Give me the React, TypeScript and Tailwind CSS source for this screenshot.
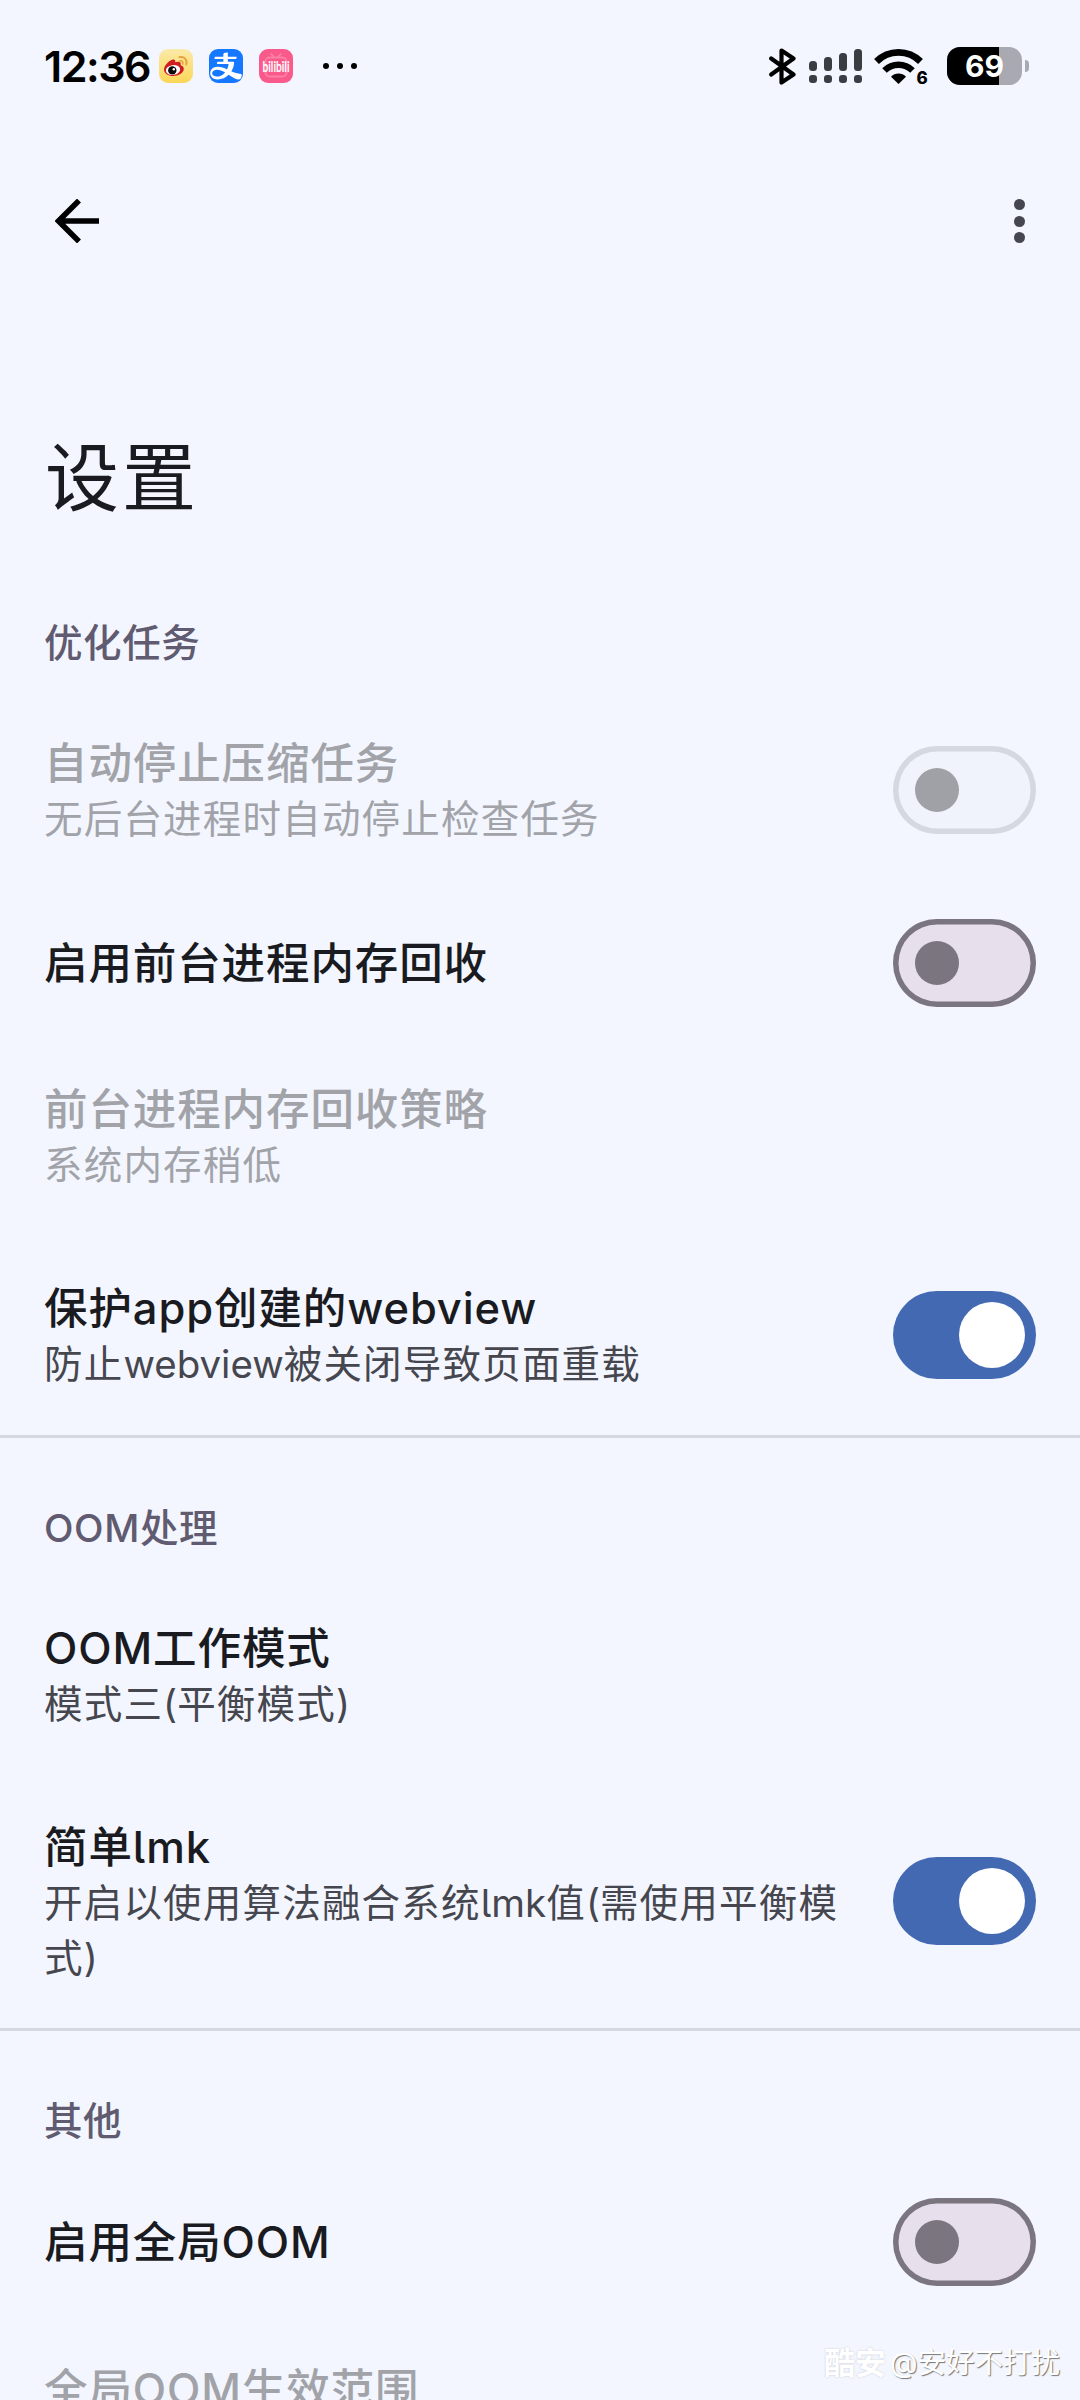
import React, { useState } from 'react';
import { AiOutlineAlipay } from 'react-icons/ai';

interface PreferenceProps {
    title: string;
    summary?: string;
    disabled?: boolean;
    defaultChecked?: boolean;
    hasSwitch?: boolean;
}

const WeiboIcon: React.FC = () => (
    <svg className="w-[34px] h-[34px]" viewBox="0 0 34 34">
        <defs>
            <linearGradient id="weibo" x1="0" y1="0" x2="0" y2="1">
                <stop offset="0" stopColor="#fae9a9" />
                <stop offset="1" stopColor="#fbd758" />
            </linearGradient>
        </defs>
        <rect width="34" height="34" rx="9" fill="url(#weibo)" />
        <path d="M5 20.500c0-4 5.500-9.500 9-10 2-.2 2.500 1 2.200 2.800 2.300-.9 5.300-1 5.600 1.200.1.800-.2 1.400-.3 1.800 2 .6 3.500 1.600 3.300 4-.3 3.700-5.300 6.700-10.600 6.700C9.300 27 5 24.500 5 20.500z" fill="#d01b20" />
        <ellipse cx="14" cy="21" rx="7.200" ry="4.900" fill="#fff" transform="rotate(-8 14 21)" />
        <circle cx="13.300" cy="21.400" r="4.200" fill="#0b0b0b" />
        <circle cx="14.800" cy="20.200" r="1.200" fill="#fff" />
        <path d="M20.300 8.200c5-1.200 8.300 2.800 7 7.300" fill="none" stroke="#e9a13a" strokeWidth="1.900" strokeLinecap="round" />
        <path d="M21 12c2.200-.5 3.400 1 2.800 3" fill="none" stroke="#e9a13a" strokeWidth="1.600" strokeLinecap="round" />
    </svg>
);

const BilibiliIcon: React.FC = () => (
    <svg className="w-[34px] h-[34px]" viewBox="0 0 34 34">
        <rect width="34" height="34" rx="9" fill="#fa5a8b" />
        <path d="M12 5l3 3M22 5l-3 3" stroke="#fc86aa" strokeWidth="1.500" strokeLinecap="round" />
        <rect x="6.500" y="8.500" width="21" height="19" rx="4" fill="none" stroke="#fc80a6" strokeWidth="1.800" />
        <text x="3.500" y="22.500" textLength="27" lengthAdjust="spacingAndGlyphs" fontFamily="Lato" fontWeight="700" fontSize="15" fill="#fff">bilibili</text>
    </svg>
);

const BluetoothIcon: React.FC = () => (
    <svg className="w-[27px] h-[37px]" viewBox="0 0 27 37" fill="none" stroke="#000" strokeWidth="4.200" strokeLinejoin="round" strokeLinecap="round">
        <path d="M2.200 10.500L24.500 26.500L12.500 34.500V2.500L24.500 10.500L2.200 26.500" />
    </svg>
);

const SignalIcon: React.FC = () => (
    <svg className="w-[53px] h-[34px]" viewBox="0 0 53 34" fill="#3a3d41">
        {[12, 8, 4, 0].map((top, index) => (
            <g key={index}>
                <rect x={index * 15} y={top} width="8" height={22 - top} rx="3.500" />
                <rect x={index * 15} y="26" width="8" height="8" rx="3.200" />
            </g>
        ))}
    </svg>
);

const WifiIcon: React.FC = () => (
    <svg className="w-[54px] h-[38px]" viewBox="0 0 54 38">
        <path d="M2.500 14.500a31 31 0 0 1 44 0" fill="none" stroke="#000" strokeWidth="6.800" />
        <path d="M10.500 23.500a20 20 0 0 1 28 0" fill="none" stroke="#000" strokeWidth="6.500" />
        <path d="M24.500 37l-7.500-7.300a10.500 10.500 0 0 1 15 0z" fill="#000" />
        <text x="42.500" y="37" fontFamily="Inter" fontWeight="800" fontSize="17" fill="#000">6</text>
    </svg>
);

const Battery: React.FC<{ level: number }> = ({ level }) => (
    <div className="flex items-center gap-[3px]">
        <div className="relative w-[75px] h-[38px] rounded-[13px] bg-[#a9a9b1] overflow-hidden">
            <div className="h-full bg-black" style={{ width: `${level}%` }}></div>
            <span className="absolute inset-0 text-center font-bold text-[30px] leading-[38px] text-white">{level}</span>
        </div>
        <div className="w-[4px] h-[12px] rounded-r-full bg-[#a9a9b1]"></div>
    </div>
);

const StatusBar: React.FC = () => (
    <div className="flex items-center h-[132px] pl-[44px] pr-[51px]">
        <span className="w-[115px] text-[43px] font-semibold leading-[60px] tracking-[-1.5px] text-black whitespace-nowrap">12:36</span>
        <div className="flex items-center gap-4">
            <WeiboIcon />
            <div className="flex items-center justify-center w-[34px] h-[34px] rounded-[9px] bg-[#1677ff] overflow-hidden">
                <AiOutlineAlipay className="w-[36px] h-[36px] shrink-0 text-white" />
            </div>
            <BilibiliIcon />
        </div>
        <div className="flex gap-2 ml-[30px]">
            <i className="w-[6px] h-[6px] rounded-full bg-black"></i>
            <i className="w-[6px] h-[6px] rounded-full bg-black"></i>
            <i className="w-[6px] h-[6px] rounded-full bg-black"></i>
        </div>
        <div className="flex items-center ml-auto">
            <BluetoothIcon />
            <div className="ml-[13px]"><SignalIcon /></div>
            <div className="ml-[12px]"><WifiIcon /></div>
            <div className="ml-[19px]"><Battery level={69} /></div>
        </div>
    </div>
);

const Toolbar: React.FC = () => (
    <div className="flex items-center justify-between h-[178px] pl-[55px] pr-[55.500px]">
        <button>
            <svg className="w-[44px] h-[44px]" viewBox="0 0 44 44" fill="none" stroke="#000" strokeWidth="5.500">
                <path d="M44 22H5M24 1.500L3.500 22L24 42.500" />
            </svg>
        </button>
        <button className="flex flex-col gap-[5.500px]">
            <i className="w-[11px] h-[11px] rounded-full bg-[#46464f]"></i>
            <i className="w-[11px] h-[11px] rounded-full bg-[#46464f]"></i>
            <i className="w-[11px] h-[11px] rounded-full bg-[#46464f]"></i>
        </button>
    </div>
);

const Switch: React.FC<{ checked: boolean; disabled?: boolean; onClick: () => void }> = ({ checked, disabled, onClick }) => {
    if (checked) {
        return (
            <button onClick={onClick} className="flex items-center justify-end w-[143px] h-[88px] pr-[11px] rounded-full bg-[#4269b2] shrink-0">
                <span className="w-[66px] h-[66px] rounded-full bg-white"></span>
            </button>
        );
    }
    return (
        <button
            onClick={onClick}
            disabled={disabled}
            className={`flex items-center w-[143px] h-[88px] pl-[22px] rounded-full shrink-0 ${disabled ? 'shadow-[inset_0_0_0_5.500px_#d5d8e0] bg-[#f0f3fc]' : 'shadow-[inset_0_0_0_5.500px_#7b757f] bg-[#e7dfeb]'}`}
        >
            <span className={`w-[44px] h-[44px] rounded-full ${disabled ? 'bg-[#9fa1a7]' : 'bg-[#7b757f]'}`}></span>
        </button>
    );
};

const Category: React.FC<{ children: React.ReactNode }> = ({ children }) => (
    <h2 className="h-[137px] pt-[63px] px-[44px] text-[38.500px] leading-[55px] font-medium tracking-[0.6px] text-[#605b70]">{children}</h2>
);

// Latin runs are set without the extra tracking of the Chinese text
const renderSummary = (text: string) =>
    text.split(/([a-z()]+)/).map((part, index) =>
        index % 2 ? <span key={index} className="tracking-normal">{part}</span> : part
    );

const Preference: React.FC<PreferenceProps> = ({ title, summary, disabled, defaultChecked = false, hasSwitch }) => {
    const [checked, setChecked] = useState(defaultChecked);

    return (
        <div className="flex items-center min-h-[147px] px-[44px] py-[43px]">
            <div className={`flex-1 pr-[44px] ${summary ? 'mt-px -mb-px' : ''}`}>
                <div className={`text-[43.500px] leading-[58px] font-medium tracking-[0.900px] ${disabled ? 'text-[#a1a3a9]' : 'text-[#1a1b21]'}`}>{title}</div>
                {summary && (
                    <div className={`text-[38.500px] leading-[55px] tracking-[1.2px] ${disabled ? 'text-[#a1a3a9]' : 'text-[#46464f]'}`}>{renderSummary(summary)}</div>
                )}
            </div>
            {hasSwitch && (
                <div className="flex items-center h-[61px]">
                    <Switch checked={checked} disabled={disabled} onClick={() => setChecked(!checked)} />
                </div>
            )}
        </div>
    );
};

const Divider: React.FC = () => <div className="h-[3px] bg-[#d5d8e1]"></div>;

const App: React.FC = () => {
    return (
        <div
            lang="zh-CN"
            className="relative w-[1080px] h-[2400px] overflow-hidden bg-[#f3f6fe] font-[Inter,'Noto_Sans_CJK_SC',sans-serif] [font-feature-settings:'cv05']"
        >
            <StatusBar />
            <Toolbar />
            <h1 className="h-[243px] pt-[118px] pl-[45px] text-[74px] leading-[100px] tracking-[3px] text-[#1a1b21]">设置</h1>

            <div className="pb-px">
                <Category>优化任务</Category>
                <Preference title="自动停止压缩任务" summary="无后台进程时自动停止检查任务" disabled hasSwitch />
                <Preference title="启用前台进程内存回收" hasSwitch />
                <Preference title="前台进程内存回收策略" summary="系统内存稍低" disabled />
                <Preference title="保护app创建的webview" summary="防止webview被关闭导致页面重载" defaultChecked hasSwitch />
            </div>
            <Divider />

            <Category>OOM处理</Category>
            <Preference title="OOM工作模式" summary="模式三(平衡模式)" />
            <Preference title="简单lmk" summary="开启以使用算法融合系统lmk值(需使用平衡模式)" defaultChecked hasSwitch />
            <Divider />

            <Category>其他</Category>
            <Preference title="启用全局OOM" hasSwitch />
            <Preference title="全局OOM生效范围" disabled />

            {/* watermark */}
            <div className="absolute right-[20px] bottom-[17px] flex items-center gap-[4px] leading-[40px] text-white whitespace-nowrap">
                <span className="text-[31px] font-bold [text-shadow:0_0_2px_#c5c8d0]">酷安</span>
                <span className="text-[28.500px] [text-shadow:1px_1px_1px_#777]">@安好不打扰</span>
            </div>
        </div>
    );
};

export default App;
